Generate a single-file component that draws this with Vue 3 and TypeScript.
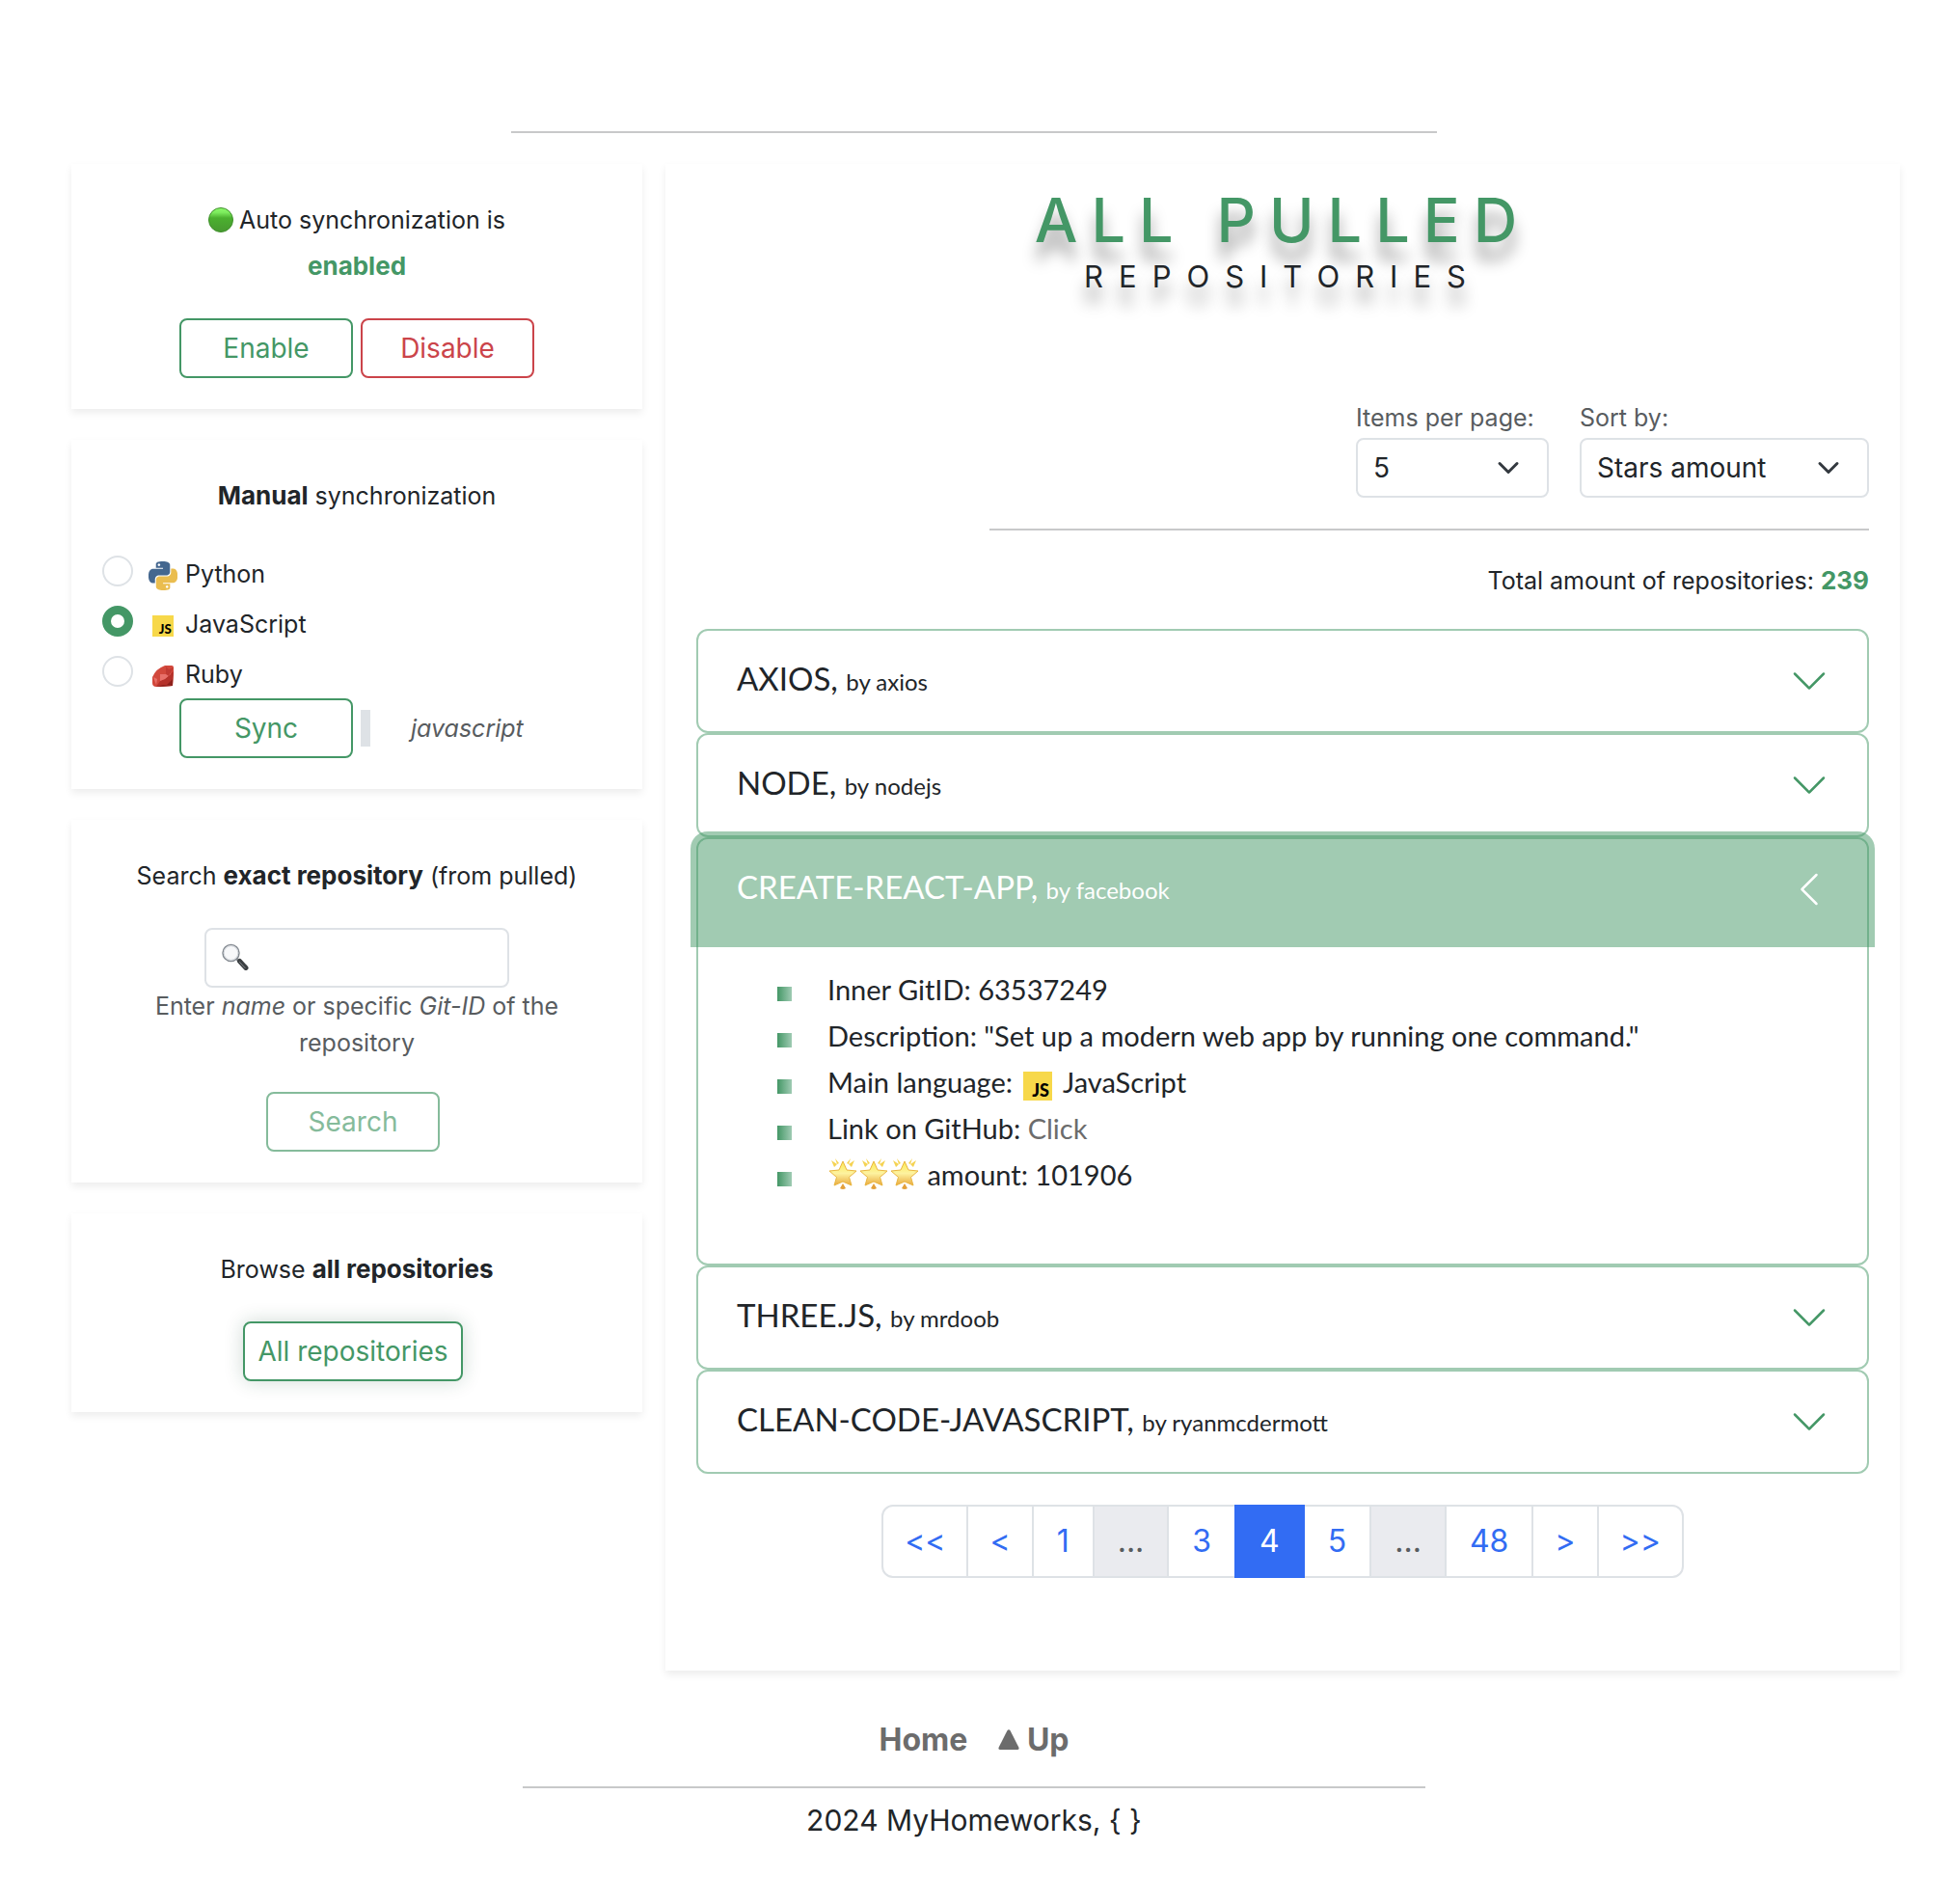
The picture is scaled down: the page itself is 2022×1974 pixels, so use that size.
<script setup lang="ts">
import { ref } from 'vue'

interface Repo {
  name: string
  owner: string
  gitId?: number
  description?: string
  stars?: number
}

const languages = [
  { id: 'python', label: 'Python' },
  { id: 'javascript', label: 'JavaScript' },
  { id: 'ruby', label: 'Ruby' },
]
const language = ref('javascript')
const query = ref('')
const perPage = ref('5')
const sortBy = ref('stars')
const total = 239

const repos: Repo[] = [
  { name: 'AXIOS', owner: 'axios' },
  { name: 'NODE', owner: 'nodejs' },
  {
    name: 'CREATE-REACT-APP',
    owner: 'facebook',
    gitId: 63537249,
    description: 'Set up a modern web app by running one command.',
    stars: 101906,
  },
  { name: 'THREE.JS', owner: 'mrdoob' },
  { name: 'CLEAN-CODE-JAVASCRIPT', owner: 'ryanmcdermott' },
]
const opened = ref('CREATE-REACT-APP')

const pages = ['<<', '<', '1', '...', '3', '4', '5', '...', '48', '>', '>>']
const currentPage = '4'

function toggle(name: string) {
  opened.value = opened.value === name ? '' : name
}

function isStep(page: string) {
  return page.startsWith('<') || page.startsWith('>')
}
</script>

<template>
  <div class="page">
    <hr class="rule rule-top" />

    <div class="columns">
      <aside class="side">
        <section class="card centered">
          <p>
            <svg class="dot" viewBox="0 0 26 26" aria-hidden="true">
              <defs>
                <linearGradient id="dotFill" x1="0" y1="0" x2="0" y2="1">
                  <stop offset="0" stop-color="#8dfb6c" />
                  <stop offset="0.2" stop-color="#7bea5c" />
                  <stop offset="0.42" stop-color="#4bb02f" />
                  <stop offset="1" stop-color="#479930" />
                </linearGradient>
              </defs>
              <circle cx="13" cy="13" r="12.5" fill="url(#dotFill)" stroke="#3f8f2b" stroke-width="1" />
            </svg>
            <small>Auto synchronization is</small><br />
            <small><strong class="green">enabled</strong></small>
          </p>
          <div class="buttons">
            <button type="button" class="btn">Enable</button>
            <button type="button" class="btn btn-danger">Disable</button>
          </div>
        </section>

        <section class="card">
          <p class="centered"><small><strong>Manual</strong> synchronization</small></p>
          <div v-for="item in languages" :key="item.id" class="check">
            <input :id="item.id" v-model="language" type="radio" name="language" :value="item.id" />
            <label :for="item.id">
              <span class="lang-icon">
                <svg v-if="item.id === 'python'" width="30" height="30" viewBox="0 0 24 24" aria-hidden="true">
                  <path fill="#44678f" d="M14.25.18l.9.2.73.26.59.3.45.32.34.34.25.34.16.33.1.3.04.26.02.2-.01.13V8.5l-.05.63-.13.55-.21.46-.26.38-.3.31-.33.25-.35.19-.35.14-.33.1-.3.07-.26.04-.21.02H8.77l-.69.05-.59.14-.5.22-.41.27-.33.32-.27.35-.2.36-.15.37-.1.35-.07.32-.04.27-.02.21v3.06H3.17l-.21-.03-.28-.07-.32-.12-.35-.18-.36-.26-.36-.36-.35-.46-.32-.59-.28-.73-.21-.88-.14-1.05-.05-1.23.06-1.22.16-1.04.24-.87.32-.71.36-.57.4-.44.42-.33.42-.24.4-.16.36-.1.32-.05.24-.01h.16l.06.01h8.16v-.83H6.18l-.01-2.75-.02-.37.05-.34.11-.31.17-.28.25-.26.31-.23.38-.2.44-.18.51-.15.58-.12.64-.1.71-.06.77-.04.84-.02 1.27.05zm-6.3 1.98l-.23.33-.08.41.08.41.23.34.33.22.41.09.41-.09.33-.22.23-.34.08-.41-.08-.41-.23-.33-.33-.22-.41-.09-.41.09z" />
                  <path fill="#eabd4f" d="M21.1 6.11l.28.06.32.12.35.18.36.27.36.35.35.47.32.59.28.73.21.88.14 1.04.05 1.23-.06 1.23-.16 1.04-.24.86-.32.71-.36.57-.4.45-.42.33-.42.24-.4.16-.36.09-.32.05-.24.02-.16-.01h-8.22v.82h5.84l.01 2.76.02.36-.05.34-.11.31-.17.29-.25.25-.31.24-.38.2-.44.17-.51.15-.58.13-.64.09-.71.07-.77.04-.84.01-1.27-.04-1.07-.14-.9-.2-.73-.25-.59-.3-.45-.33-.34-.34-.25-.34-.16-.33-.1-.3-.04-.25-.02-.2.01-.13v-5.34l.05-.64.13-.54.21-.46.26-.38.3-.32.33-.24.35-.2.35-.14.33-.1.3-.06.26-.04.21-.02.13-.01h5.84l.69-.05.59-.14.5-.21.41-.28.33-.32.27-.35.2-.36.15-.36.1-.35.07-.32.04-.28.02-.21V6.07h2.09l.14.01zm-6.47 14.25l-.23.33-.08.41.08.41.23.33.33.23.41.08.41-.08.33-.23.23-.33.08-.41-.08-.41-.23-.33-.33-.23-.41-.08-.41.08z" />
                </svg>
                <svg v-else-if="item.id === 'javascript'" width="22" height="22" viewBox="0 0 30 30" aria-hidden="true">
                  <rect width="30" height="30" fill="#f7d84a" />
                  <text x="27" y="26" text-anchor="end" class="js-mark">JS</text>
                </svg>
                <svg v-else width="22" height="22" viewBox="0 0 22 22" aria-hidden="true">
                  <path fill="#d2483c" d="M13 0h7q2 0 2 2v5l-1 14-17 1q-4 0-4-4v-6Q4 3 13 0z" />
                  <path fill="#b5322b" d="M22 6l-1 15-8-7zM4 22l4-6 5-2 8 7z" />
                  <path fill="#8e211c" d="M21 21l-6-1 6-6zM5 22l6-2 10 1z" />
                  <path fill="#e8706a" d="M8 9l6 0-1 5-5 2zM14 9l3-5 2 5-6 5zM1 12l4 2-1 6z" />
                  <path fill="#c13a33" d="M14 1l3 3 5-2-5 9-3-2z" />
                </svg>
              </span>
              <small>{{ item.label }}</small>
            </label>
          </div>
          <div class="buttons sync">
            <button type="button" class="btn">Sync</button>
            <output class="picked"><em>{{ language }}</em></output>
          </div>
        </section>

        <section class="card centered">
          <p><small>Search <strong>exact repository</strong> (from pulled)</small></p>
          <div class="search">
            <input v-model="query" type="text" aria-label="Repository name or Git-ID" />
            <svg class="lens" viewBox="0 0 28 28" aria-hidden="true">
              <path d="M15.500 16l3 3" stroke="#8b8f94" stroke-width="3" />
              <path d="M18.500 18.500l6.500 7" stroke="#3b3f42" stroke-width="5" stroke-linecap="round" />
              <path d="M18.500 19.500l5.500 6" stroke="#83878a" stroke-width="1" stroke-linecap="round" />
              <circle cx="9.500" cy="10" r="8.500" fill="#f7f8fa" stroke="#858b92" stroke-width="1.500" />
              <circle cx="9.500" cy="10" r="7.300" fill="none" stroke="#d3d7dc" stroke-width="1" />
            </svg>
          </div>
          <div class="help">Enter <em>name</em> or specific <em>Git-ID</em> of the repository</div>
          <div class="buttons single">
            <button type="button" class="btn" disabled>Search</button>
          </div>
        </section>

        <section class="card centered">
          <p><small>Browse <strong>all repositories</strong></small></p>
          <div class="buttons single">
            <button type="button" class="btn btn-glow">All repositories</button>
          </div>
        </section>
      </aside>

      <main class="card main">
        <h1>
          <span class="title">ALL PULLED</span>
          <span class="subtitle">REPOSITORIES</span>
        </h1>

        <div class="filters">
          <div class="filter filter-narrow">
            <label for="perPage">Items per page:</label>
            <select id="perPage" v-model="perPage">
              <option value="5">5</option>
              <option value="10">10</option>
            </select>
          </div>
          <div class="filter filter-wide">
            <label for="sortBy">Sort by:</label>
            <select id="sortBy" v-model="sortBy">
              <option value="stars">Stars amount</option>
              <option value="name">Name</option>
            </select>
          </div>
        </div>

        <hr class="rule rule-filters" />
        <p class="total"><small>Total amount of repositories: <strong class="green">{{ total }}</strong></small></p>

        <div class="accordion">
          <article v-for="repo in repos" :key="repo.name" class="item">
            <h2>
              <button
                type="button"
                class="toggle"
                :class="{ open: opened === repo.name }"
                :aria-expanded="opened === repo.name"
                @click="toggle(repo.name)"
              >
                <span class="name">{{ repo.name }}, <span class="owner">by {{ repo.owner }}</span></span>
                <svg class="chevron" viewBox="0 0 16 16" aria-hidden="true">
                  <path fill="currentColor" fill-rule="evenodd" d="M1.646 4.646a.5.5 0 0 1 .708 0L8 10.293l5.646-5.647a.5.5 0 0 1 .708.708l-6 6a.5.5 0 0 1-.708 0l-6-6a.5.5 0 0 1 0-.708z" />
                </svg>
              </button>
            </h2>
            <div v-if="opened === repo.name && repo.gitId" class="body">
              <ul>
                <li>Inner GitID: {{ repo.gitId }}</li>
                <li>Description: "{{ repo.description }}"</li>
                <li>
                  Main language:
                  <svg class="inline-js" viewBox="0 0 30 30" aria-hidden="true">
                    <rect width="30" height="30" fill="#f7d84a" />
                    <text x="27" y="26" text-anchor="end" class="js-mark">JS</text>
                  </svg>
                  JavaScript
                </li>
                <li>Link on GitHub: <a href="#">Click</a></li>
                <li>
                  <span class="stars">
                    <svg v-for="n in 3" :key="n" viewBox="0 0 32 32" aria-hidden="true">
                      <defs>
                        <linearGradient :id="'star' + n" x1="0" y1="0" x2="0" y2="1">
                          <stop offset="0" stop-color="#fce94f" />
                          <stop offset="0.5" stop-color="#fdf3a0" />
                          <stop offset="1" stop-color="#eaa93c" />
                        </linearGradient>
                      </defs>
                      <path fill="#f5d352" d="M4 2l6 4-3 3zM28 2l-6 4 3 3zM8 0l4 5-2 1zM24 0l-4 5 2 1z" />
                      <path fill="#e3a03a" d="M16 26l3 5q-3 2-6 0z" />
                      <path :fill="'url(#star' + n + ')'" stroke="#e9b53f" stroke-width="1" stroke-linejoin="round" d="M16 3l4 9 10 1-7.500 6.500L25 28l-9-4-9 4 2.500-8.500L2 13l10-1z" />
                    </svg>
                  </span>
                  amount: {{ repo.stars }}
                </li>
              </ul>
            </div>
          </article>
        </div>

        <nav aria-label="Pages">
          <ul class="pagination">
            <li v-for="(p, i) in pages" :key="i">
              <span v-if="p === '...'" class="page-link disabled">{{ p }}</span>
              <a v-else href="#" class="page-link" :class="{ active: p === currentPage, step: isStep(p) }">{{ p }}</a>
            </li>
          </ul>
        </nav>
      </main>
    </div>

    <footer>
      <nav class="foot-nav">
        <a href="#">Home</a>
        <a href="#" class="up">
          <svg viewBox="0 0 22 22" aria-hidden="true">
            <path fill="currentColor" d="M9.300 1.500q1.700-2.500 3.400 0l8.600 17q1 2.500-1.500 2.500H2.200q-2.500 0-1.500-2.500z" />
          </svg>
          Up
        </a>
      </nav>
      <hr class="rule rule-foot" />
      <p>2024 MyHomeworks, { }</p>
    </footer>
  </div>
</template>

<style>
body {
  margin: 0;
  background: #fff;
}
</style>

<style scoped>
* {
  box-sizing: border-box;
}

.page {
  --green: #449766;
  --green-soft: rgba(68, 151, 102, 0.5);
  --ink: #212529;
  --muted: #585c5f;
  --line: #dee2e6;
  padding: 136px 2px 0 0;
  color: var(--ink);
  font: 400 32px/48px Inter, "Liberation Sans", sans-serif;
}

p {
  margin: 0 0 32px;
}

small {
  font-size: 25px;
  line-height: 32px;
}

strong {
  font-size: 26px;
  font-weight: 700;
}

.green {
  color: var(--green);
}

.rule {
  height: 2px;
  margin: 0 auto;
  border: 0;
  background: #c8c9ca;
}

.rule-top {
  width: calc(50% - 50px);
}

.columns {
  display: grid;
  grid-template-columns: 592fr 1280fr;
  gap: 24px;
  align-items: start;
  padding: 32px 50px 0 74px;
}

.side {
  display: grid;
  gap: 32px;
}

.card {
  padding: 32px;
  background: #fff;
  box-shadow: 0 4px 8px rgba(0, 0, 0, 0.075);
}

.centered {
  text-align: center;
}

.dot {
  width: 26px;
  height: 26px;
  margin-right: 6px;
  vertical-align: -4px;
}

.buttons {
  display: flex;
  justify-content: center;
  gap: 8px;
}

.single {
  padding-right: 8px;
}

.btn {
  min-width: 180px;
  padding: 8px 13px;
  border: 2px solid var(--green);
  border-radius: 8px;
  background: transparent;
  color: var(--green);
  font: inherit;
  font-size: 28px;
  line-height: 42px;
}

.btn-danger {
  border-color: #cb444a;
  color: #cb444a;
}

.btn:disabled {
  opacity: 0.65;
}

.btn-glow {
  box-shadow: 0 0 20px rgba(20, 70, 45, 0.2);
}

.check {
  display: flex;
  gap: 16px;
  height: 48px;
  margin-bottom: 4px;
}

.check input {
  appearance: none;
  width: 32px;
  height: 32px;
  margin: 8px 0 0;
  border: 2px solid var(--line);
  border-radius: 50%;
  background: #fff;
}

.check input:checked {
  border: 9px solid var(--green);
}

.check label {
  display: flex;
  gap: 8px;
}

.check small {
  padding-top: 11px;
}

.lang-icon {
  display: flex;
  width: 30px;
  height: 58px;
  align-items: center;
  justify-content: center;
}

.js-mark {
  font: 900 18px Lato, sans-serif;
}

.sync {
  align-items: center;
}

.picked {
  width: 180px;
  padding-left: 42px;
  border-left: 10px solid var(--line);
  color: var(--muted);
  font-size: 25px;
  line-height: 38px;
}

.search {
  position: relative;
  width: 316px;
  margin: 0 auto;
}

.search input {
  display: block;
  width: 100%;
  height: 62px;
  padding: 8px 16px;
  border: 2px solid var(--line);
  border-radius: 8px;
  font: inherit;
  font-size: 28px;
}

.lens {
  position: absolute;
  top: 16px;
  left: 18px;
  width: 28px;
  height: 28px;
}

.help {
  margin-bottom: 32px;
  color: var(--muted);
  font-size: 25px;
  line-height: 38px;
}

.main {
  padding-bottom: 96px;
}

h1 {
  display: flex;
  flex-direction: column;
  align-items: center;
  margin: 0 0 94px;
  font-weight: 400;
  text-shadow: 0 18px 16px rgba(0, 0, 0, 0.4);
}

.title {
  color: var(--green);
  font-size: 63px;
  font-weight: 500;
  line-height: 52px;
  letter-spacing: 14px;
}

.subtitle {
  font-size: 31px;
  line-height: 66px;
  letter-spacing: 16px;
}

.filters {
  display: flex;
  justify-content: flex-end;
  gap: 32px;
}

.filter {
  display: flex;
  flex-direction: column;
}

.filter-narrow {
  width: 200px;
}

.filter-wide {
  width: 300px;
}

.filter label {
  margin-bottom: 2px;
  color: var(--muted);
  font-size: 25px;
  line-height: 38px;
}

select {
  appearance: none;
  height: 62px;
  padding: 8px 60px 8px 16px;
  border: 2px solid var(--line);
  border-radius: 8px;
  background: #fff url("data:image/svg+xml,%3csvg xmlns='http://www.w3.org/2000/svg' viewBox='0 0 16 16'%3e%3cpath fill='none' stroke='%23343a40' stroke-linecap='round' stroke-linejoin='round' stroke-width='2' d='m2 5 6 6 6-6'/%3e%3c/svg%3e") no-repeat right 28px center / 24px 24px;
  color: var(--ink);
  font: inherit;
  font-size: 28px;
  line-height: 42px;
}

.rule-filters {
  width: 75%;
  margin: 32px 0 0 auto;
}

.total {
  margin: 26px 0 28px;
  text-align: right;
}

.item {
  border: 2px solid var(--green-soft);
  border-radius: 12px;
}

h2 {
  margin: 0;
  font: inherit;
}

.toggle {
  display: flex;
  width: 100%;
  padding: 32px 40px;
  border: 0;
  border-radius: 10px;
  background: transparent;
  align-items: flex-start;
  justify-content: space-between;
  color: var(--ink);
  font: 400 33px/34px Lato, sans-serif;
  text-align: left;
}

.toggle.open {
  border-radius: 10px 10px 0 0;
  background: var(--green-soft);
  box-shadow: 0 0 0 8px var(--green-soft);
  color: #fff;
}

.owner {
  font-size: 24px;
  line-height: 24px;
}

.chevron {
  width: 40px;
  height: 40px;
  color: var(--green);
}

.open .chevron {
  color: #fff;
  transform: rotate(90deg);
}

.body {
  padding: 28px 40px 68px;
  font-family: Lato, sans-serif;
  font-size: 29px;
}

.body ul {
  margin: 0;
  padding: 0 0 0 94px;
  list-style: none;
}

.body li {
  position: relative;
}

.body li::before {
  position: absolute;
  top: 21px;
  left: -52px;
  width: 15px;
  height: 15px;
  background: linear-gradient(90deg, var(--green), #9fcbb3);
  content: "";
}

.inline-js {
  width: 30px;
  height: 30px;
  margin: 0 4px;
  vertical-align: -8px;
}

.stars {
  display: inline-flex;
  vertical-align: -4px;
}

.stars svg {
  width: 32px;
  height: 32px;
}

.body a {
  color: #6c6c6c;
  text-decoration: none;
}

.pagination {
  display: flex;
  justify-content: center;
  margin: 32px 0 0;
  padding: 0;
  list-style: none;
}

.pagination li + li {
  margin-left: -2px;
}

.page-link {
  display: block;
  padding: 12px 24px;
  border: 2px solid var(--line);
  background: #fff;
  color: #326cf3;
  text-decoration: none;
}

.page-link.step {
  padding: 12px 22px;
}

.pagination li:first-child .page-link {
  border-radius: 12px 0 0 12px;
}

.pagination li:last-child .page-link {
  border-radius: 0 12px 12px 0;
}

.page-link.disabled {
  background: #eaebef;
  color: var(--muted);
}

.page-link.active {
  position: relative;
  border-color: #326cf3;
  background: #326cf3;
  color: #fff;
}

footer {
  padding: 48px 0 52px;
  text-align: center;
}

.foot-nav {
  display: flex;
  justify-content: center;
  gap: 32px;
  margin-bottom: 24px;
}

.foot-nav a {
  color: #6c6c6c;
  font-weight: 700;
  text-decoration: none;
}

.up svg {
  width: 22px;
  height: 22px;
}

.rule-foot {
  width: calc(50% - 74px);
}

footer p {
  margin: 9px 0 0;
  font-size: 30px;
}
</style>
